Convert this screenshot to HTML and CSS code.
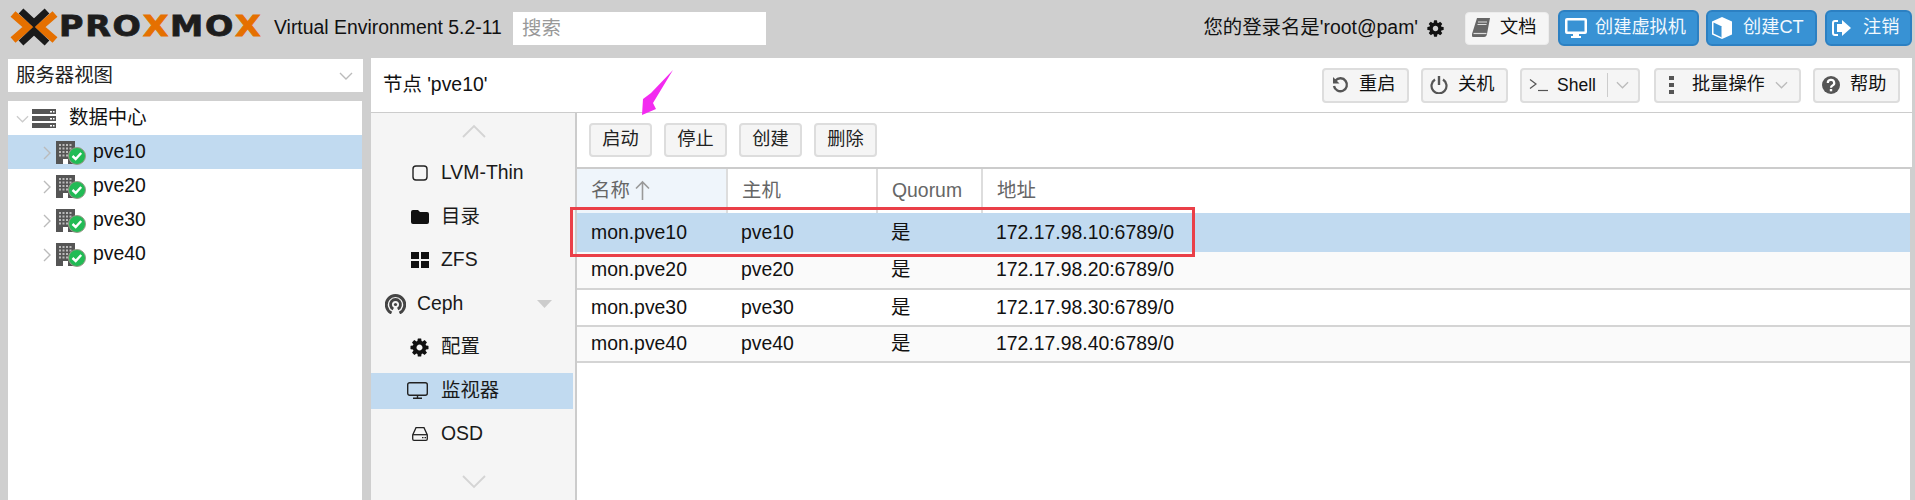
FILE: index.html
```html
<!DOCTYPE html>
<html lang="zh">
<head>
<meta charset="utf-8">
<title>Proxmox Virtual Environment</title>
<link rel="stylesheet" href="styles.css">
</head>
<body>
<svg class="defs" width="0" height="0" aria-hidden="true">
  <symbol id="cog" viewBox="0 0 1792 1792"><path d="M1152 896q0-106-75-181t-181-75-181 75-75 181 75 181 181 75 181-75 75-181zm512-109v222q0 12-8 23t-20 13l-185 28q-19 54-39 91 35 50 107 138 10 12 10 25t-9 23q-27 37-99 108t-94 71q-12 0-26-9l-138-108q-44 23-91 38-16 136-29 186-7 28-36 28h-222q-14 0-24.500-8.500t-11.500-21.500l-28-184q-49-16-90-37l-141 107q-10 9-25 9-14 0-25-11-126-114-165-168-7-10-7-23 0-12 8-23 15-21 51-66.500t54-70.500q-27-50-41-99l-183-27q-13-2-21-12.500t-8-23.500v-222q0-12 8-23t19-13l186-28q14-46 39-92-40-57-107-138-10-12-10-24 0-10 9-23 26-36 98.500-107.500t94.500-71.500q13 0 26 10l138 107q44-23 91-38 16-136 29-186 7-28 36-28h222q14 0 24.500 8.500t11.500 21.500l28 184q49 16 90 37l142-107q9-9 24-9 13 0 25 10 129 119 165 170 7 8 7 22 0 12-8 23-15 21-51 66.500t-54 70.500q26 50 41 98l183 28q13 2 21 12.500t8 23.500z"/></symbol>
  <symbol id="chev-down" viewBox="0 0 14 8"><path d="M1 1l6 6 6-6" fill="none" stroke="currentColor" stroke-width="1.4"/></symbol>
  <symbol id="chev-right" viewBox="0 0 8 14"><path d="M1 1l6 6-6 6" fill="none" stroke="currentColor" stroke-width="1.4"/></symbol>
  <symbol id="node" viewBox="0 0 30 24">
    <path d="M0 0h19v23H0z" fill="#555"/>
    <path d="M3 3h2v2H3zM6.500 3h2v2h-2zM10 3h2v2h-2zM13.500 3h2v2h-2zM3 6.500h2v2H3zM6.500 6.500h2v2h-2zM10 6.500h2v2h-2zM13.500 6.500h2v2h-2zM3 10h2v2H3zM6.500 10h2v2h-2zM10 10h2v2h-2zM13.500 10h2v2h-2zM3 13.500h2v2H3zM6.500 13.500h2v2h-2zM10 13.500h2v2h-2z" fill="#bbb"/>
    <path d="M7 18h5v5H7z" fill="#fff"/>
    <circle cx="21" cy="15" r="8.500" fill="#22bb55" stroke="#9a9a8a" stroke-width="1"/>
    <path d="M16.500 15l3.200 3 5.500-6" fill="none" stroke="#fff" stroke-width="2.400"/>
  </symbol>
</svg>

<div class="app">
  <header class="topbar">
    <div class="logo">
      <svg class="logo-mark" viewBox="0 0 48 38" width="48" height="38" aria-hidden="true">
        <path d="M3 6l15 13L3 32M45 6L30 19l15 13" fill="none" stroke="#e57000" stroke-width="7.500"/>
        <path d="M11 3l13 12L37 3M11 35l13-12 13 12" fill="none" stroke="#1a1a1a" stroke-width="7"/>
      </svg>
      <span class="logo-text">PRO<b>X</b>MO<b>X</b></span>
    </div>
    <div class="version">Virtual Environment 5.2-11</div>
    <input class="search" type="text" placeholder="搜索">
    <div class="user">您的登录名是'root@pam'</div>
    <svg class="ic-cog-user"><use href="#cog"/></svg>
    <button class="btn-doc">
      <svg class="ic-book" viewBox="0 0 18 20"><path d="M5 0h13l-3 16q-.5 3-3 3H1q-1.500 0-1-3z" fill="#666"/><path d="M6 4h9M5.500 6.500h9" stroke="#ddd" stroke-width="1"/><path d="M1.500 15.500h13" stroke="#ddd" stroke-width="1.200"/></svg>
      文档
    </button>
    <button class="btn-blue btn-vm">
      <svg class="ic-desktop" viewBox="0 0 22 20"><path d="M2 0h18a2 2 0 0 1 2 2v12a2 2 0 0 1-2 2h-6v2h2v2H6v-2h2v-2H2a2 2 0 0 1-2-2V2a2 2 0 0 1 2-2zm.500 2.500v11h17v-11z" fill="#fff"/></svg>
      创建虚拟机
    </button>
    <button class="btn-blue btn-ct">
      <svg class="ic-cube" viewBox="0 0 20 22"><path d="M10 0l10 4.500v13L10 22 0 17.500v-13z" fill="#fff"/><path d="M1.500 5.500L10 9.500v11l-8.500-4z" fill="#3892d4"/><path d="M10 9.500v11" stroke="#fff"/></svg>
      创建CT
    </button>
    <button class="btn-blue btn-out">
      <svg class="ic-out" viewBox="0 0 19 16"><path d="M6 1H3a2 2 0 0 0-2 2v10a2 2 0 0 0 2 2h3" fill="none" stroke="#fff" stroke-width="2"/><path d="M10 0l9 8-9 8v-4H5V4h5z" fill="#fff"/></svg>
      注销
    </button>
  </header>

  <div class="main">
    <aside class="side">
      <div class="combo">服务器视图<svg class="combo-chev"><use href="#chev-down"/></svg></div>
      <ul class="tree">
        <li class="tree-root">
          <svg class="tree-toggle"><use href="#chev-down"/></svg>
          <svg class="ic-dc" viewBox="0 0 24 19"><path d="M0 0h24v5H0zM0 7h24v5H0zM0 14h24v5H0z" fill="#555"/><path d="M18 2h2v1.500h-2zM21 2h1.500v1.500H21zM18 9h2v1.500h-2zM21 9h1.500v1.500H21zM18 16h2v1.500h-2zM21 16h1.500v1.500H21z" fill="#fff"/></svg>
          数据中心
        </li>
        <li class="tree-node is-selected"><svg class="node-toggle"><use href="#chev-right"/></svg><svg class="ic-node"><use href="#node"/></svg>pve10</li>
        <li class="tree-node"><svg class="node-toggle"><use href="#chev-right"/></svg><svg class="ic-node"><use href="#node"/></svg>pve20</li>
        <li class="tree-node"><svg class="node-toggle"><use href="#chev-right"/></svg><svg class="ic-node"><use href="#node"/></svg>pve30</li>
        <li class="tree-node"><svg class="node-toggle"><use href="#chev-right"/></svg><svg class="ic-node"><use href="#node"/></svg>pve40</li>
      </ul>
    </aside>

    <section class="panel">
      <div class="titlebar">
        <div class="title">节点 'pve10'</div>
        <div class="actions">
          <button class="btn">
            <svg class="ic" viewBox="0 0 18 18"><path d="M4.500 5.500A6.500 6.500 0 1 1 3 11" transform="translate(0 -1)" fill="none" stroke="#555" stroke-width="2.400"/><path d="M2 1v6.500h6.500z" fill="#555"/></svg>
            重启
          </button>
          <button class="btn">
            <svg class="ic" viewBox="0 0 18 18"><path d="M5 3.500a7.500 7.500 0 1 0 8 0" fill="none" stroke="#555" stroke-width="2.200"/><path d="M9 0v9" stroke="#555" stroke-width="2.400"/></svg>
            关机
          </button>
          <div class="btn-split btn-shell">
            <svg class="ic-term" viewBox="0 0 19 14"><path d="M1 1.500L7 6 1 10.500" fill="none" stroke="#555" stroke-width="1.200"/><path d="M9 12.500h10" stroke="#555" stroke-width="1.200"/></svg>
            <span class="shell-label">Shell</span>
            <span class="split-arrow"><svg class="split-chev"><use href="#chev-down"/></svg></span>
          </div>
          <div class="btn-split btn-bulk">
            <svg class="ic-dots" viewBox="0 0 5 20"><path d="M0 1h5v4H0zM0 8h5v4H0zM0 15h5v4H0z" fill="#555"/></svg>
            <span class="bulk-label">批量操作</span>
            <svg class="split-chev"><use href="#chev-down"/></svg>
          </div>
          <button class="btn">
            <svg class="ic" viewBox="0 0 18 18"><circle cx="9" cy="9" r="9" fill="#555"/><path d="M5.800 7a3.200 3 0 1 1 4.400 2.700q-1.200.6-1.200 2" fill="none" stroke="#fff" stroke-width="2.200"/><path d="M7.800 13h2.400v2.300H7.800z" fill="#fff"/></svg>
            帮助
          </button>
        </div>
      </div>

      <div class="body">
        <nav class="nav">
          <svg class="nav-scroll nav-up" viewBox="0 0 24 14"><path d="M1 13L12 2l11 11" fill="none" stroke="currentColor" stroke-width="1.800"/></svg>
          <a class="nav-item"><svg class="nav-ic" viewBox="-1 -1 18 18"><rect x="1" y="1" width="14" height="14" rx="3" fill="none" stroke="#222" stroke-width="1.400"/></svg>LVM-Thin</a>
          <a class="nav-item"><svg class="nav-ic" viewBox="0 0 18 16"><path d="M2 1h5l2 2h7a2 2 0 0 1 2 2v8a2 2 0 0 1-2 2H2a2 2 0 0 1-2-2V3a2 2 0 0 1 2-2z" fill="#111"/></svg>目录</a>
          <a class="nav-item"><svg class="nav-ic" viewBox="0 0 18 16"><path d="M0 0h8v7H0zM10 0h8v7h-8zM0 9h8v7H0zM10 9h8v7h-8z" fill="#111"/></svg>ZFS</a>
          <a class="nav-item nav-group">
            <svg class="ic-ceph" viewBox="0 0 21 20"><path d="M6.500 19A9.200 9.200 0 1 1 14.500 19" fill="none" stroke="#444" stroke-width="3"/><path d="M8.300 15A5 5 0 1 1 12.700 15" fill="none" stroke="#444" stroke-width="2.800"/><circle cx="10.500" cy="10.500" r="1.600" fill="#444"/></svg>
            Ceph
            <svg class="nav-tri" viewBox="0 0 15 8"><path d="M0 0h15L7.500 8z" fill="#ccc"/></svg>
          </a>
          <a class="nav-item"><svg class="nav-cog"><use href="#cog"/></svg>配置</a>
          <a class="nav-item is-active"><svg class="ic-monitor" viewBox="0 0 21 17"><rect x=".7" y=".7" width="19.600" height="12.600" rx="2" fill="none" stroke="#222" stroke-width="1.400"/><path d="M10.500 13.500v3M6 16.300h9" stroke="#222" stroke-width="1.400"/></svg>监视器</a>
          <a class="nav-item"><svg class="nav-ic" viewBox="-1 -1 18 16"><path d="M4 .7h8L15.300 8v4a1.300 1.300 0 0 1-1.300 1.300H2A1.300 1.300 0 0 1 .7 12V8z" fill="none" stroke="#222" stroke-width="1.300"/><path d="M1 7.700h14" stroke="#222" stroke-width="1.300"/><path d="M10 10h1.500v1.300H10zM12.500 10H14v1.300h-1.500z" fill="#222"/></svg>OSD</a>
          <svg class="nav-scroll nav-down" viewBox="0 0 24 14"><path d="M1 1l11 11L23 1" fill="none" stroke="currentColor" stroke-width="1.800"/></svg>
        </nav>

        <div class="content">
          <div class="toolbar">
            <button class="tool">启动</button>
            <button class="tool">停止</button>
            <button class="tool">创建</button>
            <button class="tool">删除</button>
          </div>
          <div class="grid-wrap">
            <table class="grid">
              <colgroup><col class="c1"><col class="c2"><col class="c3"><col></colgroup>
              <thead>
                <tr>
                  <th class="is-sorted">名称<svg class="sort" viewBox="0 0 15 20"><path d="M7.500 20V2M1 8.500L7.500 2 14 8.500" fill="none" stroke="#999" stroke-width="1.600"/></svg></th>
                  <th>主机</th><th>Quorum</th><th>地址</th>
                </tr>
              </thead>
              <tbody>
                <tr class="is-selected"><td>mon.pve10</td><td>pve10</td><td>是</td><td>172.17.98.10:6789/0</td></tr>
                <tr class="alt"><td>mon.pve20</td><td>pve20</td><td>是</td><td>172.17.98.20:6789/0</td></tr>
                <tr><td>mon.pve30</td><td>pve30</td><td>是</td><td>172.17.98.30:6789/0</td></tr>
                <tr class="alt"><td>mon.pve40</td><td>pve40</td><td>是</td><td>172.17.98.40:6789/0</td></tr>
              </tbody>
            </table>
          </div>
        </div>
      </div>
    </section>
  </div>

  <div class="callout-box"></div>
  <svg class="callout-arrow" viewBox="0 0 40 52"><path d="M34 1L12 24 4 30 3 46 17 40 14 34z" fill="#f32bf0"/></svg>
</div>
</body>
</html>
```

FILE: styles.css
```css
* { box-sizing: border-box; }
html, body { margin: 0; height: 100%; }
body {
  background: #cfcfcf;
  color: #111;
  font: 19.4px/1.2 "Liberation Sans", "Noto Sans CJK SC", sans-serif;
  overflow: hidden;
}
.defs { position: absolute; }
svg { display: block; flex: none; }
button { font: inherit; margin: 0; cursor: pointer; }

.app { position: relative; width: 1915px; height: 500px; display: flex; flex-direction: column; }

/* top bar */
.topbar { height: 58px; flex: none; padding: 10px 3px 12px 10px; display: flex; align-items: center; }
.logo { display: flex; align-items: center; width: 252px; height: 38px; margin-top: -3px; }
.logo-mark { margin-right: 1px; }
.logo-text {
  font: 700 29px/1 "DejaVu Sans", sans-serif;
  letter-spacing: 1.5px;
  color: #1d1d1d;
  -webkit-text-stroke: .8px #1d1d1d;
  white-space: nowrap;
  transform: scaleX(1.15);
  transform-origin: left center;
}
.logo-text b { color: #e57000; -webkit-text-stroke-color: #e57000; }
.version { margin-left: 12px; width: 226px; white-space: nowrap; }
.search {
  margin-left: 13px; width: 253px; height: 33px; border: 0; padding: 0 9px;
  background: #fff; font: inherit; outline: 0;
}
.search::placeholder { color: #999; opacity: 1; }
.user { margin-left: auto; white-space: nowrap; }
.ic-cog-user { width: 19px; height: 19px; margin: 0 20px 0 8px; fill: #111; }

.btn-doc {
  width: 84px; height: 33px; padding: 0 0 0 6px; margin-right: 9px;
  display: flex; align-items: center; font-size: 18.2px;
  background: #f5f5f5; border: 1px solid #ececec; border-radius: 4px; color: #111;
}
.ic-book { width: 18px; height: 20px; margin-right: 10px; }
.btn-blue {
  height: 36px; padding: 0; display: flex; align-items: center; font-size: 18.2px;
  background: #3892d4; border: 2px solid #2c80c2; border-radius: 6px; color: #f1f8fd;
}
.btn-vm { width: 141px; padding-left: 5px; margin-right: 7px; }
.ic-desktop { width: 22px; height: 20px; margin-right: 8px; }
.btn-ct { width: 111px; padding-left: 4px; margin-right: 8px; }
.ic-cube { width: 20px; height: 22px; margin-right: 11px; }
.btn-out { width: 87px; padding-left: 5px; }
.ic-out { width: 19px; height: 16px; margin-right: 12px; }

/* main */
.main { flex: 1; min-height: 0; display: flex; padding-left: 8px; padding-right: 3px; }
.side { width: 355px; flex: none; display: flex; flex-direction: column; padding-top: 1px; }
.combo {
  height: 33px; flex: none; background: #fff; display: flex; align-items: center;
  justify-content: space-between; padding: 0 10px 0 8px; color: #222;
}
.combo-chev { width: 14px; height: 8px; color: #bbb; }
.tree { flex: 1; list-style: none; margin: 9px 1px 0 0; padding: 0; background: #fff; }
.tree-root, .tree-node { height: 34px; display: flex; align-items: center; }
.tree-toggle { width: 13px; height: 8px; margin: 2px 3px 0 8px; color: #ccc; }
.ic-dc { width: 24px; height: 19px; margin-right: 13px; }
.node-toggle { width: 8px; height: 14px; margin: 2px 5px 0 35px; color: #bbb; }
.ic-node { width: 30px; height: 24px; margin-right: 7px; margin-top: 2px; }
.tree-node.is-selected { background: #c1daf0; }

.panel { flex: 1; min-width: 0; margin-left: 8px; display: flex; flex-direction: column; }
.titlebar {
  height: 55px; flex: none; background: #fff; border-bottom: 1px solid #ccc;
  display: flex; align-items: center; justify-content: space-between; padding: 0 12px 0 12px;
}
.actions { display: flex; align-items: center; gap: 12px; }
.btn, .btn-split {
  height: 35px; display: flex; align-items: center; font-size: 18.2px; color: #111;
  background: #f5f5f5; border: 2px solid #ddd; border-radius: 4px;
}
.btn { width: 87px; padding: 0 0 0 7px; }
.ic { width: 18px; height: 18px; margin-right: 10px; }
.btn-shell { width: 120px; padding-left: 7px; margin-right: 2px; font-size: 17.5px; }
.ic-term { width: 19px; height: 14px; margin-right: 9px; }
.shell-label { width: 50px; }
.split-arrow { height: 24px; border-left: 1px solid #ccc; padding-left: 8px; display: flex; align-items: center; }
.split-chev { width: 13px; height: 8px; color: #bbb; }
.btn-bulk { width: 147px; padding-left: 13px; }
.ic-dots { width: 5px; height: 20px; margin-right: 18px; }
.bulk-label { margin-right: 10px; white-space: nowrap; }

.body { flex: 1; min-height: 0; display: flex; }
.nav {
  width: 206px; flex: none; background: #f5f5f5; border-right: 2px solid #ccc;
  display: flex; flex-direction: column; padding-right: 2px; padding-top: 42px; position: relative;
}
.nav-scroll { position: absolute; left: 91px; width: 24px; height: 14px; color: #d4d4d4; }
.nav-up { top: 11px; }
.nav-down { top: 362px; }
.nav-item {
  height: 36px; flex: none; margin-bottom: 7.5px; padding-left: 40px;
  display: flex; align-items: center; color: #1a1a1a;
}
.nav-ic { width: 18px; height: 18px; margin-right: 12px; fill: #111; }
.nav-cog { width: 21px; height: 21px; margin-left: -2px; margin-right: 11px; fill: #111; }
.nav-group { padding-left: 14px; }
.ic-ceph { width: 21px; height: 20px; margin-right: 11px; }
.nav-tri { width: 15px; height: 8px; margin-left: auto; margin-right: 21px; }
.ic-monitor { width: 21px; height: 17px; margin-left: -4px; margin-right: 13px; }
.nav-item.is-active { background: #c1daf0; }

.content { flex: 1; min-width: 0; display: flex; flex-direction: column; }
.toolbar {
  height: 54px; flex: none; background: #fff; padding: 10px 0 0 12px;
  display: flex; gap: 12px; align-items: flex-start;
}
.tool {
  width: 63px; height: 34px; padding: 0; font-size: 18.2px; color: #222;
  background: #f5f5f5; border: 2px solid #ddd; border-radius: 4px;
}
.grid-wrap { flex: 1; min-height: 0; background: #fff; margin-right: 2px; border-top: 2px solid #ccc; }
.grid { width: 100%; table-layout: fixed; border-collapse: collapse; }
.grid .c1 { width: 150px; }
.grid .c2 { width: 150px; }
.grid .c3 { width: 105px; }
.grid th {
  height: 44px; padding: 0 0 0 14px; text-align: left; font-weight: 400; color: #666;
  border-right: 2px solid #ddd; white-space: nowrap;
}
.grid th:last-child { border-right: 0; }
.grid th.is-sorted { background: #eff5fb; }
.sort { display: inline-block; width: 15px; height: 20px; margin-left: 5px; vertical-align: -3px; }
.grid td { height: 37px; padding: 0 0 0 14px; border-bottom: 2px solid #d4d4d4; color: #111; }
.grid tr.is-selected td { height: 39px; background: #c1daf0; border-bottom: 0; }
.grid tr:last-child td { height: 36px; }
.grid tr.alt td { background: #fafafa; }

/* overlays */
.callout-box {
  position: absolute; left: 570px; top: 207px; width: 625px; height: 50px;
  border: 3px solid #ea3f48; pointer-events: none;
}
.callout-arrow { position: absolute; left: 639px; top: 69px; width: 40px; height: 52px; pointer-events: none; }
```
